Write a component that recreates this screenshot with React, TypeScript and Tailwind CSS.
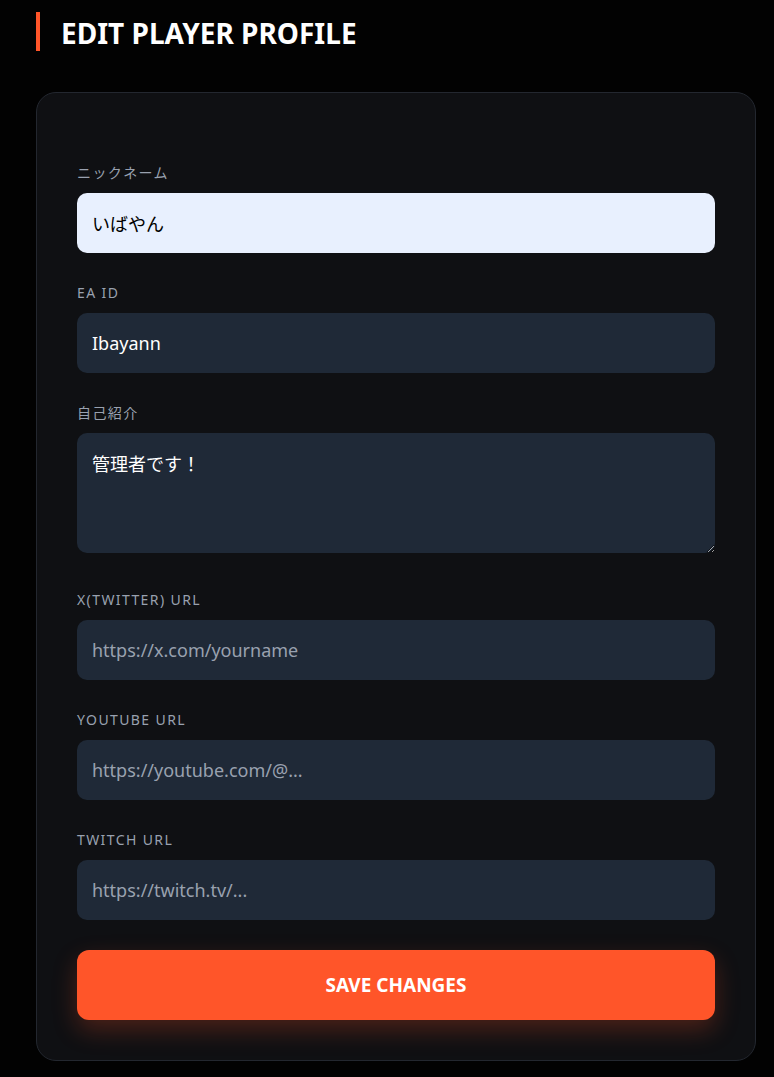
import { useState } from 'react';

const font = { fontFamily: '"Noto Sans", "Noto Sans CJK JP", sans-serif' };

function Field({
  label,
  value,
  placeholder,
  autofill,
}: {
  label: string;
  value?: string;
  placeholder?: string;
  autofill?: boolean;
}) {
  const [v, setV] = useState(value ?? '');
  return (
    <div className="flex flex-col">
      <label className="h-5 mb-[10px] text-[14px] leading-5 tracking-[0.1em] text-gray-400 uppercase">
        {label}
      </label>
      <input
        value={v}
        onChange={(e) => setV(e.target.value)}
        placeholder={placeholder}
        className={`h-[60px] w-full rounded-[10px] px-[15px] text-[18px] outline-none placeholder:text-gray-400 ${
          autofill ? 'bg-[#e8f0fe] text-black' : 'bg-[#1f2937] text-white'
        }`}
        style={font}
      />
    </div>
  );
}

export default function App() {
  const [bio, setBio] = useState('管理者です！');

  return (
    <div className="min-h-[1077px] bg-[#020202] pt-3 pb-4 px-9" style={font}>
      {/* Title */}
      <div className="flex items-center h-[39px] border-l-4 border-[#ff5529] pl-[21px]">
        <h1 className="pt-[3px] text-[28px] font-bold text-white uppercase">Edit Player Profile</h1>
      </div>

      {/* Card */}
      <div className="mt-[41px] w-[720px] rounded-[20px] border border-[#23272f] bg-[#0f1013] px-10 pt-[70px] pb-10">
        <div className="flex flex-col gap-[30px]">
          <Field label="ニックネーム" value="いばやん" autofill />
          <Field label="EA ID" value="Ibayann" />
          <div className="flex flex-col">
            <label className="h-5 mb-[10px] text-[14px] leading-5 tracking-[0.1em] text-gray-400">
              自己紹介
            </label>
            <textarea
              value={bio}
              onChange={(e) => setBio(e.target.value)}
              className="block h-[120px] w-full rounded-[10px] bg-[#1f2937] px-[15px] pt-[18px] pb-[14px] text-[18px] text-white outline-none"
              style={font}
            />
          </div>
          <div className="pt-[7px] flex flex-col gap-[30px]">
            <Field label="X(Twitter) URL" placeholder="https://x.com/yourname" />
            <Field label="YouTube URL" placeholder="https://youtube.com/@..." />
            <Field label="Twitch URL" placeholder="https://twitch.tv/..." />
          </div>
          <button className="h-[70px] w-full rounded-[12px] bg-[#ff5529] text-[19px] font-bold text-white uppercase shadow-[0_10px_25px_rgba(255,85,41,0.25)]">
            Save Changes
          </button>
        </div>
      </div>
    </div>
  );
}
